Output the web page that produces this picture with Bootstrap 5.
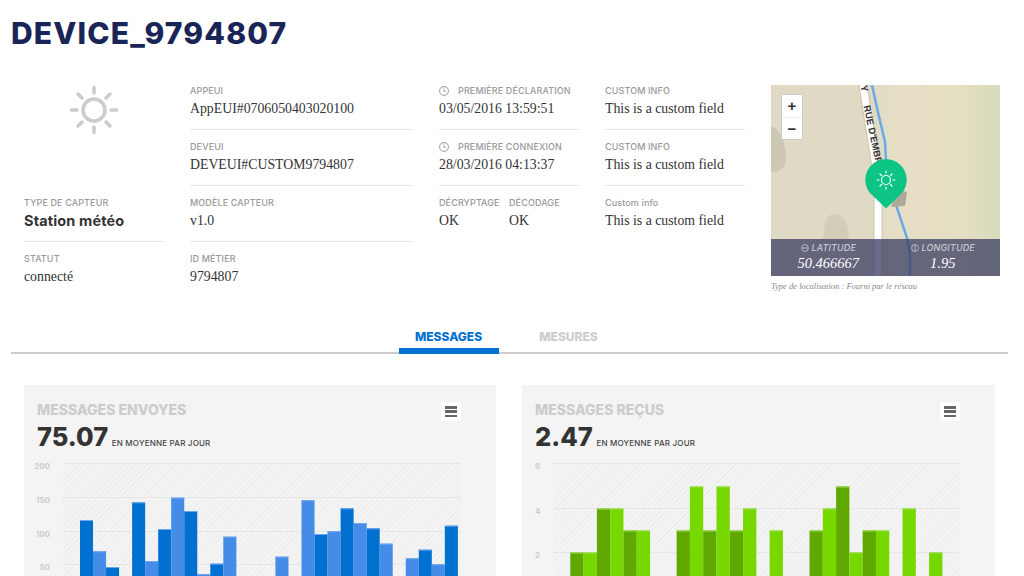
<!DOCTYPE html>
<html lang="fr">
<head>
  <meta charset="UTF-8" />
  <title>DEVICE_9794807</title>
  <link href="https://cdn.jsdelivr.net/npm/bootstrap@5.3.0/dist/css/bootstrap.min.css" rel="stylesheet" />
  <style>
    html, body { height: 576px; overflow: hidden; background: #fff; }
    body { font-family: "Liberation Serif", serif; color: #333; }

    .device-title {
      font-family: Inter, sans-serif; font-weight: 800; font-size: 30px; line-height: 36px;
      letter-spacing: 1.15px; color: #1a2557; margin: 15px 0 34px 11px;
    }

    .info { gap: 26px; padding-left: 24px; height: 222px; }
    .col-a { width: 140px; }
    .col-b { width: 223px; }
    .col-c { width: 229px; }
    .sun-box { height: 112px; }

    .item { height: 45px; margin-bottom: 11px; border-bottom: 1px solid #e6e6e6; }
    .item.last { border-bottom: 0; }
    .lbl {
      font-family: Inter, sans-serif; font-weight: 500; font-size: 9px; line-height: 11px;
      letter-spacing: .12px; color: #999; margin-bottom: 3px; white-space: nowrap;
    }
    .lbl svg { margin-right: 9px; vertical-align: -2px; }
    .val { font-size: 13.8px; line-height: 20px; color: #333; white-space: nowrap; }
    .val.strong { font-family: Inter, sans-serif; font-weight: 700; font-size: 14.5px; letter-spacing: .15px; }
    .half { width: 70px; }

    .map { height: 191px; overflow: hidden; }
    .map > svg { display: block; }
    .zoom-ctl {
      position: absolute; left: 10px; top: 9px; width: 22px; background: #fff;
      border: 1px solid #ccc; border-radius: 2px; font-family: "Liberation Sans", sans-serif; font-weight: 700;
    }
    .zoom-ctl div { height: 22px; line-height: 21px; text-align: center; font-size: 15px; color: #333; }
    .zoom-ctl div + div { border-top: 1px solid #eee; }
    .coords {
      position: absolute; left: 0; right: 0; bottom: 0; height: 37px;
      background: rgba(62, 64, 102, .77); color: #fff; font-style: italic; text-align: center;
    }
    .coords .lbl { color: #c9cad6; font-size: 9px; line-height: 11px; margin: 3px 0 0; }
    .coords .lbl svg { margin-right: 3px; vertical-align: -1px; }
    .coords .num { font-size: 14.5px; line-height: 21px; }
    .loc-type { font-style: italic; font-size: 8.5px; line-height: 12px; color: #888; margin-top: 4px; }

    .tabs { margin: 3px 16px 0 11px; padding-right: 2px; border-bottom: 2px solid #ccc; height: 44px; gap: 20px; }
    .tabs .nav-link {
      width: 100px; height: 44px; padding: 19px 0 0; text-align: center;
      font-family: Inter, sans-serif; font-weight: 800; font-size: 12px; line-height: 15px; color: #ccc;
    }
    .tabs .nav-link.active { color: #0071d0; border-bottom: 6px solid #0071d0; }

    .panels { gap: 26px; margin: 31px 0 0 24px; }
    .panel { width: 472px; height: 191px; background: #f4f4f4; border: 0; border-radius: 0; overflow: hidden; }
    .panel + .panel { width: 473px; }
    .panel-head { padding: 17px 35px 0 13px; height: 73px; }
    .menu-btn { width: 20px; height: 19px; background: #fff; padding: 4px; }
    .menu-btn i { display: block; height: 2.500px; background: #666; margin-bottom: 1.800px; }
    .panel-title { font-family: Inter, sans-serif; font-weight: 800; font-size: 14px; line-height: 16px; color: #ccc; }
    .big { font-family: Inter, sans-serif; font-weight: 800; font-size: 25.5px; line-height: 30px; color: #333; margin-top: 4px; }
    .big small { font-weight: 500; font-size: 8px; letter-spacing: .2px; color: #444; margin-left: -2px; }
    .chart { display: block; }
    .chart text { font-family: Inter, sans-serif; font-weight: 700; font-size: 8px; fill: #ccc; }
  </style>
</head>
<body>
  <h1 class="device-title">DEVICE_9794807</h1>

  <div class="info d-flex">
    <div class="col-a">
      <div class="sun-box d-flex justify-content-center align-items-start">
        <svg width="50" height="50" viewBox="-25 -25 50 50" fill="none" stroke="#ccc" stroke-width="3.5" stroke-linecap="round">
          <circle r="11" />
          <path d="M0-22.5V-17M0 17V22.500M-22.500 0H-17M17 0H22.500M-16-16L-12-12M12 12L16 16M16-16L12-12M-12 12L-16 16" />
        </svg>
      </div>
      <div class="item"><div class="lbl">TYPE DE CAPTEUR</div><div class="val strong">Station météo</div></div>
      <div class="item last"><div class="lbl">STATUT</div><div class="val">connecté</div></div>
    </div>

    <div class="col-b">
      <div class="item"><div class="lbl">APPEUI</div><div class="val">AppEUI#0706050403020100</div></div>
      <div class="item"><div class="lbl">DEVEUI</div><div class="val">DEVEUI#CUSTOM9794807</div></div>
      <div class="item"><div class="lbl">MODÈLE CAPTEUR</div><div class="val">v1.0</div></div>
      <div class="item last"><div class="lbl">ID MÉTIER</div><div class="val">9794807</div></div>
    </div>

    <div class="col-a">
      <div class="item">
        <div class="lbl"><svg width="10" height="10" viewBox="0 0 10 10" fill="none" stroke="#aaa" stroke-width="1.1"><circle cx="5" cy="5" r="4.400" /><path d="M5 2.600V5.300H7" /></svg>PREMIÈRE DÉCLARATION</div>
        <div class="val">03/05/2016 13:59:51</div>
      </div>
      <div class="item">
        <div class="lbl"><svg width="10" height="10" viewBox="0 0 10 10" fill="none" stroke="#aaa" stroke-width="1.1"><circle cx="5" cy="5" r="4.400" /><path d="M5 2.600V5.300H7" /></svg>PREMIÈRE CONNEXION</div>
        <div class="val">28/03/2016 04:13:37</div>
      </div>
      <div class="d-flex">
        <div class="half"><div class="lbl">DÉCRYPTAGE</div><div class="val">OK</div></div>
        <div class="half"><div class="lbl">DÉCODAGE</div><div class="val">OK</div></div>
      </div>
    </div>

    <div class="col-a">
      <div class="item"><div class="lbl">CUSTOM INFO</div><div class="val">This is a custom field</div></div>
      <div class="item"><div class="lbl">CUSTOM INFO</div><div class="val">This is a custom field</div></div>
      <div class="item last"><div class="lbl">Custom info</div><div class="val">This is a custom field</div></div>
    </div>

    <div class="col-c">
      <div class="map position-relative">
        <svg width="229" height="191" viewBox="771 85 229 191">
          <defs>
            <linearGradient id="land" x1="0" x2="1" y1="0" y2="0">
              <stop offset="0" stop-color="#e0dac5" />
              <stop offset=".45" stop-color="#e0dac5" />
              <stop offset=".55" stop-color="#e6dfc5" />
              <stop offset=".85" stop-color="#e4dec2" />
              <stop offset="1" stop-color="#d7dabb" />
            </linearGradient>
          </defs>
          <rect x="771" y="85" width="229" height="191" fill="url(#land)" />
          <path d="M771 127C778 126 785 140 786 155C787 168 780 173 771 172Z" fill="#cdc7b3" />
          <path d="M825 222C827 212 842 212 846 222C849 230 849 240 848 245H820C824 238 824 230 825 222Z" fill="#d4cdb8" />
          <path d="M863 85L878 180V276" fill="none" stroke="#c9c4b5" stroke-width="9" />
          <path d="M863 85L878 180V276" fill="none" stroke="#fff" stroke-width="7" />
          <path d="M872 85L877 108L885 142L886 160L897 208L907 238L910 255V276" fill="none" stroke="#6aaae6" stroke-width="2.500" />
          <text x="0" y="0" transform="translate(863.500 106) rotate(78)" font-family="Liberation Sans, sans-serif" font-weight="700" font-size="9.500" fill="#333">RUE D'EMBR</text>
          <text x="0" y="0" transform="translate(860.500 86) rotate(78)" font-family="Liberation Sans, sans-serif" font-weight="700" font-size="9.500" fill="#333">Y</text>
          <path d="M897 190L907 192L905 206L891 207Z" fill="#aea899" />
          <path d="M886 208.500L870 193A20.700 20.700 0 1 1 902 193Z" fill="#0cc484" />
          <g fill="none" stroke="#fff" stroke-width="1.200" stroke-linecap="round">
            <circle cx="886" cy="180" r="4.500" />
            <path d="M886 171V173M886 187V189M877 180H879M893 180H895M880 174L881.500 175.500M890.500 184.500L892 186M892 174L890.500 175.500M881.500 184.500L880 186" />
          </g>
        </svg>
        <div class="zoom-ctl"><div>+</div><div>−</div></div>
        <div class="coords d-flex">
          <div class="w-50">
            <div class="lbl"><svg width="8" height="8" viewBox="0 0 8 8" fill="none" stroke="#c9cad6" stroke-width=".8"><circle cx="4" cy="4" r="3.400" /><path d="M1 4H7" /></svg>LATITUDE</div>
            <div class="num">50.466667</div>
          </div>
          <div class="w-50">
            <div class="lbl"><svg width="8" height="8" viewBox="0 0 8 8" fill="none" stroke="#c9cad6" stroke-width=".8"><circle cx="4" cy="4" r="3.400" /><path d="M4 1V7" /></svg>LONGITUDE</div>
            <div class="num">1.95</div>
          </div>
        </div>
      </div>
      <div class="loc-type">Type de localisation : Fourni par le réseau</div>
    </div>
  </div>

  <ul class="nav tabs justify-content-center">
    <li class="nav-item"><a class="nav-link active" href="#">MESSAGES</a></li>
    <li class="nav-item"><a class="nav-link" href="#">MESURES</a></li>
  </ul>

  <div class="panels d-flex">
    <div class="card panel">
      <div class="panel-head d-flex justify-content-between align-items-start">
        <div>
          <div class="panel-title">MESSAGES ENVOYES</div>
          <div class="big">75.07 <small>EN MOYENNE PAR JOUR</small></div>
        </div>
        <div class="menu-btn"><i></i><i></i><i></i></div>
      </div>
      <svg class="chart" id="chartSent" width="472" height="118" viewBox="24 458 472 118"></svg>
    </div>
    <div class="card panel">
      <div class="panel-head d-flex justify-content-between align-items-start">
        <div>
          <div class="panel-title">MESSAGES REÇUS</div>
          <div class="big">2.47 <small>EN MOYENNE PAR JOUR</small></div>
        </div>
        <div class="menu-btn"><i></i><i></i><i></i></div>
      </div>
      <svg class="chart" id="chartRecv" width="473" height="118" viewBox="522 458 473 118"></svg>
    </div>
  </div>

  <script>
    const NS = 'http://www.w3.org/2000/svg';

    function el(parent, name, attrs, text) {
      const node = document.createElementNS(NS, name);
      Object.keys(attrs).forEach(k => node.setAttribute(k, attrs[k]));
      if (text !== undefined) node.textContent = text;
      parent.appendChild(node);
      return node;
    }

    function drawChart(id, o) {
      const svg = document.getElementById(id);

      // fond hachuré
      const defs = el(svg, 'defs', {});
      const pat = el(defs, 'pattern', { id: id + 'Hatch', width: 4, height: 4, patternUnits: 'userSpaceOnUse', patternTransform: 'rotate(45)' });
      el(pat, 'rect', { width: 4, height: 4, fill: '#f4f4f4' });
      el(pat, 'line', { x1: 0, y1: 0, x2: 0, y2: 4, stroke: '#ebebeb', 'stroke-width': 2 });
      el(svg, 'rect', { x: o.x0, y: o.top, width: o.x1 - o.x0, height: 140, fill: 'url(#' + id + 'Hatch)' });

      o.grid.forEach(g => {
        el(svg, 'line', { x1: o.x0, x2: o.x1, y1: g.y, y2: g.y, stroke: '#e6e6e6', 'stroke-width': 1 });
        el(svg, 'text', { x: o.labelX, y: g.y + 5, 'text-anchor': o.anchor }, g.label);
      });

      o.bars.forEach(b => {
        const x = o.start + b[0] * o.slot;
        const color = (b[0] % 2 === o.darkOn) ? o.dark : o.light;
        el(svg, 'rect', { x: x, y: b[1], width: o.slot, height: 600 - b[1], fill: color });
        el(svg, 'rect', { x: x, y: b[1], width: o.slot, height: 1, fill: o.edge });
      });
    }

    drawChart('chartSent', {
      x0: 63, x1: 461, top: 463, labelX: 50, anchor: 'end',
      start: 80, slot: 13.03, darkOn: 0, dark: '#0071d0', light: '#448ce8', edge: '#6ea6ec',
      grid: [{ y: 463.5, label: '200' }, { y: 497.5, label: '150' }, { y: 531.5, label: '100' }, { y: 564.5, label: '50' }],
      bars: [[0, 520], [1, 551.3], [2, 567], [4, 502.3], [5, 561], [6, 529], [7, 497.7], [8, 511], [9, 574], [10, 563.7], [11, 536.7],
        [15, 556.7], [17, 500.3], [18, 534], [19, 531.3], [20, 508.3], [21, 523], [22, 528.3], [23, 543.7],
        [25, 558.3], [26, 549.7], [27, 564.3], [28, 525.7]]
    });

    const recv = [[0, 2], [1, 2], [2, 4], [3, 4], [4, 3], [5, 3], [8, 3], [9, 5], [10, 3], [11, 5], [12, 3], [13, 4],
      [15, 3], [18, 3], [19, 4], [20, 5], [21, 2], [22, 3], [23, 3], [25, 4], [27, 2]];
    drawChart('chartRecv', {
      x0: 553, x1: 960, top: 463, labelX: 535, anchor: 'start',
      start: 570.3, slot: 13.29, darkOn: 0, dark: '#5fa800', light: '#77d800', edge: '#9be04a',
      grid: [{ y: 463.5, label: '6' }, { y: 508.5, label: '4' }, { y: 552.5, label: '2' }],
      bars: recv.map(b => [b[0], 596.5 - 22 * b[1]])
    });
  </script>
  <script src="https://cdn.jsdelivr.net/npm/bootstrap@5.3.0/dist/js/bootstrap.bundle.min.js"></script>
</body>
</html>
